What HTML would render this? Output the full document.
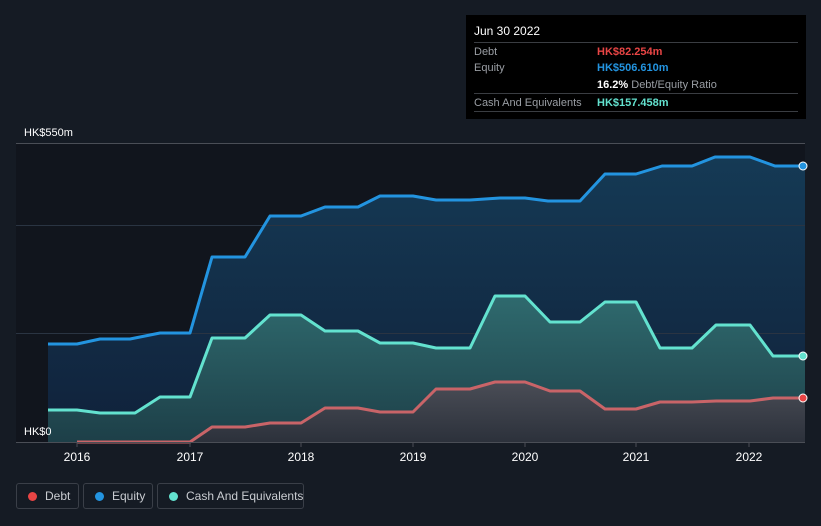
<!DOCTYPE html>
<html><head><style>
html,body{margin:0;background:#151b24;width:821px;height:526px;overflow:hidden;font-family:"Liberation Sans",sans-serif;}
.tt{position:absolute;left:466px;top:15px;width:340px;height:104px;background:#000;color:#fff;font-size:11px;}
.tt .r{position:absolute;left:8px;right:8px;border-top:1px solid #3a3d42;height:18px;line-height:18px;color:#9a9ea4;white-space:nowrap}
.tt .v{position:absolute;left:123px;font-weight:bold}
.leg{position:absolute;top:483px;height:26px;border:1px solid #3a3f48;border-radius:3px;color:#c9ccd1;font-size:12px;line-height:24px;box-sizing:border-box;white-space:nowrap}
.leg i{position:absolute;left:11px;top:8px;width:9px;height:9px;border-radius:50%}
</style></head><body>
<svg width="821" height="526" style="position:absolute;left:0;top:0">
<defs>
<linearGradient id="ge" x1="0" y1="0" x2="0" y2="1"><stop offset="0" stop-color="#153a55"/><stop offset="1" stop-color="#10213a"/></linearGradient>
<linearGradient id="gc" x1="0" y1="0" x2="0" y2="1"><stop offset="0" stop-color="#2f6a6e"/><stop offset="1" stop-color="#1d3f48"/></linearGradient>
<linearGradient id="gd" x1="0" y1="0" x2="0" y2="1"><stop offset="0" stop-color="#4a4d56"/><stop offset="1" stop-color="#2c313b"/></linearGradient>
</defs>
<rect x="16" y="143" width="789" height="299" fill="#11151d"/>
<line x1="16" y1="143.5" x2="805" y2="143.5" stroke="#4a4e56"/>
<polygon fill="url(#ge)" points="48,442 48,344 77,344 100,339 130,339 160,333 190,333 212,257 245,257 270,216 301,216 325,207 358,207 380,196 413,196 436,200 470,200 500,198 525,198 548,201 580,201 605,174 636,174 662,166 692,166 715,157 750,157 775,166 805,166 805,442"/>
<line x1="16" y1="225.5" x2="805" y2="225.5" stroke="#2a3442"/>
<line x1="16" y1="333.5" x2="805" y2="333.5" stroke="#2a3442"/>
<polygon fill="url(#gc)" points="48,442 48,410 77,410 100,413 135,413 160,397 190,397 212,338 245,338 270,315 301,315 325,331 358,331 380,343 413,343 436,348 470,348 495,296 525,296 550,322 580,322 605,302 636,302 660,348 692,348 716,325 750,325 773,356 805,356 805,442"/>
<polygon fill="url(#gd)" points="77,442 190,442 212,427 245,427 270,423 301,423 325,408 358,408 380,412 413,412 436,389 470,389 495,382 525,382 550,391 580,391 605,409 636,409 660,402 692,402 716,401 750,401 773,398 805,398 805,442"/>
<g fill="none" stroke-width="3" stroke-linejoin="round">
<polyline stroke="#2394e0" points="48,344 77,344 100,339 130,339 160,333 190,333 212,257 245,257 270,216 301,216 325,207 358,207 380,196 413,196 436,200 470,200 500,198 525,198 548,201 580,201 605,174 636,174 662,166 692,166 715,157 750,157 775,166 803,166"/>
<polyline stroke="#63e2cf" points="48,410 77,410 100,413 135,413 160,397 190,397 212,338 245,338 270,315 301,315 325,331 358,331 380,343 413,343 436,348 470,348 495,296 525,296 550,322 580,322 605,302 636,302 660,348 692,348 716,325 750,325 773,356 803,356"/>
<polyline stroke="#c96468" points="77,442 190,442 212,427 245,427 270,423 301,423 325,408 358,408 380,412 413,412 436,389 470,389 495,382 525,382 550,391 580,391 605,409 636,409 660,402 692,402 716,401 750,401 773,398 803,398"/>
</g>
<circle cx="803" cy="166" r="4" fill="#2394e0" stroke="#fff"/>
<circle cx="803" cy="356" r="4" fill="#63e2cf" stroke="#fff"/>
<circle cx="803" cy="398" r="4" fill="#e84545" stroke="#fff"/>
<line x1="16" y1="442.5" x2="805" y2="442.5" stroke="#4a4e56"/>
<g stroke="#4a4e56"><line x1="77" y1="442" x2="77" y2="447"/><line x1="190" y1="442" x2="190" y2="447"/><line x1="301" y1="442" x2="301" y2="447"/><line x1="413" y1="442" x2="413" y2="447"/><line x1="525" y1="442" x2="525" y2="447"/><line x1="636" y1="442" x2="636" y2="447"/><line x1="749" y1="442" x2="749" y2="447"/></g>
<g fill="#fff" font-size="12" font-family="Liberation Sans" text-anchor="middle">
<text x="77" y="461">2016</text><text x="190" y="461">2017</text><text x="301" y="461">2018</text><text x="413" y="461">2019</text><text x="525" y="461">2020</text><text x="636" y="461">2021</text><text x="749" y="461">2022</text>
</g>
<text x="24" y="136" fill="#fff" font-size="11" font-family="Liberation Sans">HK$550m</text>
<text x="24" y="435" fill="#fff" font-size="11" font-family="Liberation Sans">HK$0</text>
</svg>
<div class="tt">
<div style="position:absolute;left:8px;top:9px;font-size:12px">Jun 30 2022</div>
<div class="r" style="top:27px">Debt<span class="v" style="color:#e84545">HK$82.254m</span></div>
<div class="r" style="top:44px;border:none">Equity<span class="v" style="color:#2394e0">HK$506.610m</span></div>
<div class="r" style="top:61px;border:none"><span class="v" style="color:#fff">16.2% <span style="font-weight:normal;color:#9a9ea4">Debt/Equity Ratio</span></span></div>
<div class="r" style="top:78px">Cash And Equivalents<span class="v" style="color:#63e2cf">HK$157.458m</span></div>
<div style="position:absolute;left:8px;right:8px;top:96px;border-top:1px solid #3a3d42"></div>
</div>
<div class="leg" style="left:16px;width:63px"><i style="background:#e84545"></i><span style="position:absolute;left:28px">Debt</span></div>
<div class="leg" style="left:83px;width:70px"><i style="background:#2394e0"></i><span style="position:absolute;left:28px">Equity</span></div>
<div class="leg" style="left:157px;width:147px"><i style="background:#63e2cf"></i><span style="position:absolute;left:28px">Cash And Equivalents</span></div>
</body></html>
